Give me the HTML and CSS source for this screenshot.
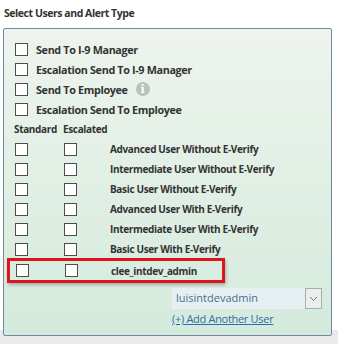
FILE: index.html
```html
<!DOCTYPE html>
<html lang="en">
<head>
    <meta charset="UTF-8">
    <title>Select Users and Alert Type</title>
    <link rel="stylesheet" href="styles.css">
</head>
<body>

    <!-- Section title -->
    <div class="section-title">Select Users and Alert Type</div>

    <!-- Alert panel -->
    <div class="alert-panel">
        <div class="row">
            <span class="check"></span>
            <span class="label">Send To I-9 Manager</span>
        </div>
        <div class="row">
            <span class="check"></span>
            <span class="label">Escalation Send To I-9 Manager</span>
        </div>
        <div class="row">
            <span class="check"></span>
            <span class="label">Send To Employee</span>
            <span class="info-icon">i</span>
        </div>
        <div class="row">
            <span class="check"></span>
            <span class="label">Escalation Send To Employee</span>
        </div>

        <div class="user-head">
            <span class="col-std">Standard</span>
            <span class="col-esc">Escalated</span>
        </div>

        <div class="user-row">
            <span class="cell"><span class="check"></span></span>
            <span class="cell"><span class="check"></span></span>
            <span class="label">Advanced User Without E-Verify</span>
        </div>
        <div class="user-row">
            <span class="cell"><span class="check"></span></span>
            <span class="cell"><span class="check"></span></span>
            <span class="label">Intermediate User Without E-Verify</span>
        </div>
        <div class="user-row">
            <span class="cell"><span class="check"></span></span>
            <span class="cell"><span class="check"></span></span>
            <span class="label">Basic User Without E-Verify</span>
        </div>
        <div class="user-row">
            <span class="cell"><span class="check"></span></span>
            <span class="cell"><span class="check"></span></span>
            <span class="label">Advanced User With E-Verify</span>
        </div>
        <div class="user-row">
            <span class="cell"><span class="check"></span></span>
            <span class="cell"><span class="check"></span></span>
            <span class="label">Intermediate User With E-Verify</span>
        </div>
        <div class="user-row">
            <span class="cell"><span class="check"></span></span>
            <span class="cell"><span class="check"></span></span>
            <span class="label">Basic User With E-Verify</span>
        </div>
        <div class="user-row highlighted">
            <span class="cell"><span class="check"></span></span>
            <span class="cell"><span class="check"></span></span>
            <span class="label">clee_intdev_admin</span>
        </div>

        <div class="add-user">
            <div class="select-box">
                <span class="select-text">luisintdevadmin</span>
                <span class="select-arrow">
                    <svg width="9" height="6" viewBox="0 0 9 6"><path d="M1 1 L4.5 4.5 L8 1" fill="none" stroke="#777" stroke-width="1"/></svg>
                </span>
            </div>
            <a href="#" class="add-link">(+) Add Another User</a>
        </div>
    </div>

</body>
</html>
```

FILE: styles.css
```css
/* General */
* {
    margin: 0;
    padding: 0;
    box-sizing: border-box;
}

body {
    font-family: "Open Sans", Arial, sans-serif;
    color: #333;
    background: linear-gradient(#ffffff 0, #ffffff 330px, #eaeaea 330px);
    width: 338px;
    height: 344px;
}

/* Title */
.section-title {
    font-size: 10.5px;
    font-weight: 700;
    letter-spacing: -0.45px;
    padding: 6px 4px 0;
    height: 28px;
}

/* Panel */
.alert-panel {
    margin: 0 6px 0 3px;
    height: 308px;
    border: 1px solid #6f8aa0;
    border-radius: 2px;
    background: linear-gradient(#eef4ed, #d4eadd);
    padding: 10px 10px 0;
}

.row {
    display: flex;
    align-items: center;
    height: 20px;
}

.row .label {
    font-size: 10.8px;
}

.check {
    display: inline-block;
    width: 13px;
    height: 13px;
    background: #fff;
    border: 1px solid #4d4d4d;
}

.row .check {
    margin-right: 8px;
    margin-left: 1px;
}

.label {
    font-size: 10px;
    font-weight: 700;
    letter-spacing: -0.35px;
    color: #333;
}

.info-icon {
    display: inline-flex;
    align-items: center;
    justify-content: center;
    width: 14px;
    height: 14px;
    margin-left: 8px;
    border-radius: 50%;
    background: #bcc0be;
    color: #fff;
    font-family: "DejaVu Serif", serif;
    font-size: 11px;
    font-weight: 700;
}

/* Standard / Escalated table */
.user-head {
    display: flex;
    align-items: center;
    height: 20px;
    font-size: 10px;
    font-weight: 700;
    letter-spacing: -0.35px;
}

.col-std {
    width: 49px;
}

.user-row {
    display: flex;
    align-items: center;
    height: 20px;
}

.user-row .cell {
    display: flex;
    width: 49px;
    padding-left: 1px;
}

.user-row .label {
    margin-left: -2px;
}

.user-row.highlighted {
    margin-left: -7px;
    padding-left: 5px;
    width: 218px;
    height: 25px;
    margin-top: -1px;
    margin-bottom: -1px;
    border: 3px solid #dd141b;
    box-shadow: 1px 2px 3px rgba(0, 0, 0, 0.25);
}

/* Add user */
.add-user {
    margin-top: 6px;
    margin-left: 158px;
}

.select-box {
    display: flex;
    width: 150px;
    height: 21px;
    background: #e6f0f3;
}

.select-text {
    flex: 1;
    font-size: 11px;
    color: #4a6f8f;
    padding: 2px 4px;
}

.select-arrow {
    display: flex;
    align-items: center;
    justify-content: center;
    width: 17px;
    border: 1px solid #a8aeb0;
    background: #eceeee;
}

.add-link {
    display: block;
    margin-top: 2px;
    font-size: 11px;
    letter-spacing: -0.3px;
    color: #2b6ead;
    text-decoration: underline;
}
```
